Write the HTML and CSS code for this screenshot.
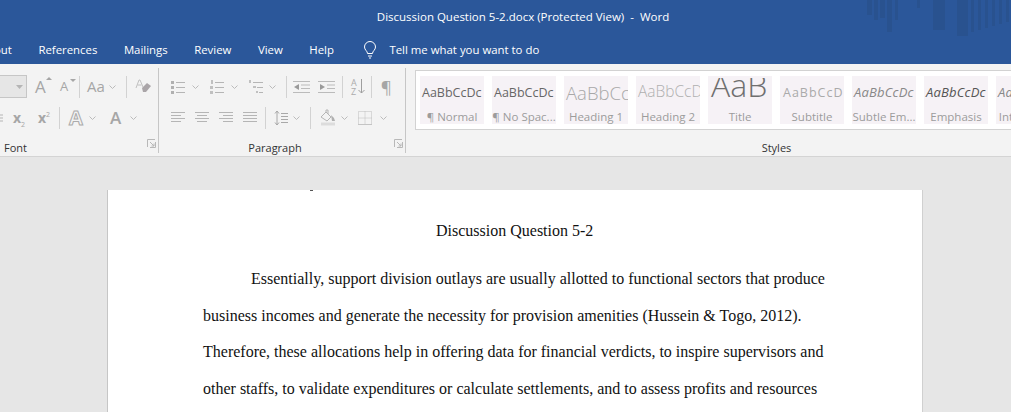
FILE: index.html
```html
<!DOCTYPE html>
<html lang="en">
<head>
<meta charset="utf-8">
<title>Discussion Question 5-2.docx (Protected View) - Word</title>
<link rel="stylesheet" href="styles.css">
</head>
<body>
<header class="titlebar">
  <svg class="pattern" width="150" height="40" viewBox="0 0 150 40" aria-hidden="true">
    <g fill="#29528f">
      <rect x="6" y="0" width="5" height="15"/><rect x="13" y="0" width="4" height="20"/><rect x="19" y="0" width="5" height="18"/><rect x="26" y="0" width="5" height="32"/><rect x="34" y="0" width="3" height="20"/>
      <rect x="56" y="0" width="3" height="8"/><rect x="72" y="0" width="12" height="30"/><rect x="96" y="0" width="11" height="36"/><rect x="110" y="0" width="3" height="32"/><rect x="117" y="0" width="3" height="30"/><rect x="124" y="0" width="3" height="28"/><rect x="131" y="0" width="3" height="26"/><rect x="138" y="0" width="3" height="24"/><rect x="145" y="0" width="3" height="22"/>
    </g>
  </svg>
  <div class="doc-title">Discussion Question 5-2.docx (Protected View)&nbsp; -&nbsp; Word</div>
  <nav class="tabs">
    <span class="tab tab-cut">Layout</span>
    <span class="tab">References</span>
    <span class="tab">Mailings</span>
    <span class="tab">Review</span>
    <span class="tab">View</span>
    <span class="tab">Help</span>
    <span class="tell">
      <svg width="14" height="18" viewBox="0 0 14 18" fill="none" stroke="#fff" stroke-width="1"><path d="M4.500 12.500C4.500 10 1.500 9 1.500 6A5.500 5.500 0 0 1 12.500 6C12.500 9 9.500 10 9.500 12.500Z"/><path d="M5 15h4M6 17h2"/></svg>
      <span>Tell me what you want to do</span>
    </span>
  </nav>
</header>

<section class="ribbon">
  <div class="group group-font">
    <div class="rows">
      <div class="row">
        <span class="combo"><svg class="chev" width="7" height="4" viewBox="0 0 7 4"><path d="M0 0h7L3.500 4Z" fill="#b5b5b5"/></svg></span>
        <span class="glyph big m8">A<i class="up"></i></span>
        <span class="glyph small m12">A<i class="down"></i></span>
        <i class="sep m7"></i>
        <span class="glyph aa m7">Aa</span>
        <svg class="chev m6" width="7" height="4" viewBox="0 0 7 4"><path d="M.5.5l3 3 3-3" fill="none" stroke="#bbb"/></svg>
        <i class="sep m10"></i>
        <svg class="m8" width="16" height="16" viewBox="0 0 16 16"><path d="M7 9l5-5 4 3-5 6H8Z" fill="#aaa5a8"/><path d="M1 9L4 1h1l3 7M2.500 6h4" fill="none" stroke="#c0c0c0"/></svg>
      </div>
      <div class="row">
        <svg width="3" height="8" viewBox="0 0 3 8"><path d="M0 1h3M0 4h3M0 7h3" stroke="#b5b5b5"/></svg>
        <span class="glyph bold m10">x<sub>2</sub></span>
        <span class="glyph bold m12">x<sup>2</sup></span>
        <i class="sep m8"></i>
        <span class="glyph outline m9">A</span>
        <svg class="chev m7" width="7" height="4" viewBox="0 0 7 4"><path d="M.5.5l3 3 3-3" fill="none" stroke="#bbb"/></svg>
        <span class="glyph colour m14">A</span>
        <svg class="chev m9" width="7" height="4" viewBox="0 0 7 4"><path d="M.5.5l3 3 3-3" fill="none" stroke="#bbb"/></svg>
      </div>
    </div>
    <footer class="group-label label-font"><span>Font</span><svg class="launcher" width="9" height="9" viewBox="0 0 9 9" fill="none" stroke="#b8b8b8"><path d="M.5 8V.5H8M8.500 3v5.500H3M3 3l4 4M7 4.500V7H4.500"/></svg></footer>
  </div>

  <div class="group group-para">
    <div class="rows">
      <div class="row">
        <svg width="14" height="14" viewBox="0 0 14 14"><path d="M5 2.500h9M5 7.500h9M5 12.500h9" stroke="#b5b5b5"/><path d="M0 1h3v3H0zM0 6h3v3H0zM0 11h3v3H0z" fill="#b0b0b0"/></svg>
        <svg class="chev m7" width="7" height="4" viewBox="0 0 7 4"><path d="M.5.5l3 3 3-3" fill="none" stroke="#bbb"/></svg>
        <svg class="m11" width="14" height="14" viewBox="0 0 14 14"><path d="M5 2.500h9M5 7.500h9M5 12.500h9" stroke="#b5b5b5"/><path d="M1 0h2v4H1zM0 6h3v3H0zM0 11h3v3H0z" fill="#c0c0c0"/></svg>
        <svg class="chev m7" width="7" height="4" viewBox="0 0 7 4"><path d="M.5.5l3 3 3-3" fill="none" stroke="#bbb"/></svg>
        <svg class="m10" width="16" height="14" viewBox="0 0 16 14"><path d="M5 2.500h10M9 7.500h6M11 12.500h4" stroke="#b5b5b5"/><path d="M1 0h2v3H1zM5 6h3v2H5zM8 11h2v2H8z" fill="#c0c0c0"/></svg>
        <svg class="chev m5" width="7" height="4" viewBox="0 0 7 4"><path d="M.5.5l3 3 3-3" fill="none" stroke="#bbb"/></svg>
        <i class="sep m10"></i>
        <svg class="m6" width="17" height="14" viewBox="0 0 17 14"><path d="M0 1.500h17M8 5h9M8 8.500h9M0 12.500h17" stroke="#bbb"/><path d="M1 7l5-3v6Z" fill="#9a9a9a"/></svg>
        <svg class="m8" width="17" height="14" viewBox="0 0 17 14"><path d="M0 1.500h17M9 5h8M9 8.500h8M0 12.500h17" stroke="#bbb"/><path d="M7 7L2 4v6Z" fill="#9a9a9a"/></svg>
        <i class="sep m7"></i>
        <span class="sort m8"><b>A<br>Z</b><svg width="7" height="15" viewBox="0 0 7 15" fill="none" stroke="#9e9e9e"><path d="M3.500 0v14M.5 11l3 3 3-3"/></svg></span>
        <i class="sep m6"></i>
        <span class="glyph pilcrow m9">¶</span>
      </div>
      <div class="row">
        <svg width="14" height="14" viewBox="0 0 14 14"><path d="M0 1.500h14M0 4.500h10M0 7.500h14M0 10.500h10" stroke="#b5b5b5"/></svg>
        <svg class="m10" width="14" height="14" viewBox="0 0 14 14"><path d="M0 1.500h14M2 4.500h10M0 7.500h14M2 10.500h10" stroke="#b5b5b5"/></svg>
        <svg class="m10" width="14" height="14" viewBox="0 0 14 14"><path d="M0 1.500h14M4 4.500h10M0 7.500h14M4 10.500h10" stroke="#b5b5b5"/></svg>
        <svg class="m10" width="14" height="14" viewBox="0 0 14 14"><path d="M0 1.500h14M0 4.500h14M0 7.500h14M0 10.500h14" stroke="#b5b5b5"/></svg>
        <i class="sep m8"></i>
        <svg class="m8" width="14" height="16" viewBox="0 0 14 16" fill="none" stroke="#a8a8a8"><path d="M3 1v14M1 3.500l2-2.500 2 2.500M1 12.500L3 15l2-2.500"/><path d="M7 3.500h7M7 6.500h7M7 9.500h7M7 12.500h7"/></svg>
        <svg class="chev m5" width="7" height="4" viewBox="0 0 7 4"><path d="M.5.5l3 3 3-3" fill="none" stroke="#bbb"/></svg>
        <i class="sep m10"></i>
        <svg class="m9" width="16" height="17" viewBox="0 0 16 17"><path d="M1 8l5-5 5 5-4 4Z" fill="none" stroke="#b5b5b5"/><path d="M6 3V1h2v4" fill="none" stroke="#b5b5b5"/><path d="M11 6l3 3 1 3h-3Z" fill="#b0b0b0"/><path d="M1 15h14" stroke="#dcdcdc" stroke-width="3"/></svg>
        <svg class="chev m5" width="7" height="4" viewBox="0 0 7 4"><path d="M.5.5l3 3 3-3" fill="none" stroke="#bbb"/></svg>
        <svg class="m10" width="14" height="14" viewBox="0 0 14 14"><path d="M.5.500h13v13H.5zM7 .5v13M.5 7h13" fill="none" stroke="#bdbdbd" stroke-dasharray="1 1"/><path d="M0 13.500h14" stroke="#c4c4c4"/></svg>
        <svg class="chev m8" width="7" height="4" viewBox="0 0 7 4"><path d="M.5.5l3 3 3-3" fill="none" stroke="#bbb"/></svg>
      </div>
    </div>
    <footer class="group-label label-para"><span>Paragraph</span><svg class="launcher" width="9" height="9" viewBox="0 0 9 9" fill="none" stroke="#b8b8b8"><path d="M.5 8V.5H8M8.500 3v5.500H3M3 3l4 4M7 4.500V7H4.500"/></svg></footer>
  </div>

  <div class="group-styles">
    <div class="gallery">
      <div class="style"><span class="sample s-normal">AaBbCcDc</span><span class="name">¶ Normal</span></div>
      <div class="style"><span class="sample s-normal">AaBbCcDc</span><span class="name">¶ No Spac...</span></div>
      <div class="style"><span class="sample s-h1">AaBbCc</span><span class="name">Heading 1</span></div>
      <div class="style"><span class="sample s-h2">AaBbCcD</span><span class="name">Heading 2</span></div>
      <div class="style"><span class="sample s-title">AaB</span><span class="name">Title</span></div>
      <div class="style"><span class="sample s-sub">AaBbCcD</span><span class="name">Subtitle</span></div>
      <div class="style"><span class="sample s-em s-subtle">AaBbCcDc</span><span class="name">Subtle Em...</span></div>
      <div class="style"><span class="sample s-em">AaBbCcDc</span><span class="name">Emphasis</span></div>
      <div class="style"><span class="sample s-em s-subtle">AaBbCcDc</span><span class="name">Intense E...</span></div>
    </div>
    <footer class="group-label label-styles">Styles</footer>
  </div>
</section>

<main class="workspace">
  <article class="page">
    <i class="prev-tail"></i>
    <h1 class="heading">Discussion Question 5-2</h1>
    <p class="line indent">Essentially, support division outlays are usually allotted to functional sectors that produce</p>
    <p class="line">business incomes and generate the necessity for provision amenities (Hussein &amp; Togo, 2012).</p>
    <p class="line">Therefore, these allocations help in offering data for financial verdicts, to inspire supervisors and</p>
    <p class="line">other staffs, to validate expenditures or calculate settlements, and to assess profits and resources</p>
  </article>
</main>
</body>
</html>
```
FILE: styles.css
```css
* { box-sizing: border-box; }
html, body { margin: 0; height: 412px; overflow: hidden; }
body { font-family: "Open Sans", "Noto Sans", sans-serif; background: #e6e6e6; }
svg { display: block; flex: none; }
i { font-style: normal; }

.titlebar { position: relative; height: 64px; background: #2b579a; color: #fff; overflow: hidden; }
.pattern { position: absolute; top: 0; right: 0; }
.doc-title { height: 33px; padding: 8px 0 0 35px; text-align: center; font-size: 11.500px; line-height: 17px; white-space: nowrap; }
.tabs { display: flex; align-items: center; height: 33px; margin-left: -24px; font-size: 11.400px; }
.tab { margin-right: 26.500px; white-space: nowrap; }
.tell { display: flex; align-items: center; gap: 12px; margin-left: 3px; font-size: 11.400px; }

.ribbon { display: flex; height: 93px; background: #f3f3f3; border-bottom: 1px solid #d4d4d4; }
.group { position: relative; display: flex; flex-direction: column; flex: none; padding-top: 11px; }
.group::after { content: ""; position: absolute; right: 0; top: 4px; bottom: 3px; width: 1px; background: #c6c6c6; }
.group-font { width: 159px; }
.group-para { width: 247px; padding-left: 12px; }
.rows { display: flex; flex-direction: column; gap: 8px; height: 71px; }
.row { display: flex; align-items: center; height: 23px; }
.sep { flex: none; width: 1px; height: 22px; background: #d2d2d2; }
.chev { flex: none; }

.combo { display: flex; align-items: center; justify-content: flex-end; flex: none; width: 27px; height: 23px; padding-right: 3px; background: #e6e6e6; border: 1px solid #c6c6c6; border-left: 0; }
.glyph { flex: none; position: relative; color: #a6a6a6; line-height: 1; }
.big { font-size: 17px; width: 13px; }
.small { font-size: 13px; width: 12px; }
.aa { font-size: 15px; width: 16px; }
.bold { font-weight: 700; font-size: 14px; width: 13px; }
.bold sub, .bold sup { font-size: 7px; line-height: 0; font-weight: 400; }
.outline { font-size: 20px; width: 13px; color: #f3f3f3; -webkit-text-stroke: 1px #ababab; font-weight: 700; }
.colour { font-size: 17px; font-weight: 600; width: 11px; }
.pilcrow { font-size: 17px; width: 10px; }
.up, .down { position: absolute; width: 0; height: 0; border-left: 3px solid transparent; border-right: 3px solid transparent; top: -1px; right: -4px; }
.up { border-bottom: 3px solid #a6a6a6; }
.down { border-top: 3px solid #a6a6a6; }
.sort { display: flex; align-items: center; gap: 1px; flex: none; }
.sort b { font-weight: 400; font-size: 9px; line-height: 9px; color: #ababab; }

.m5 { margin-left: 5px; } .m6 { margin-left: 6px; } .m7 { margin-left: 7px; } .m8 { margin-left: 8px; }
.m9 { margin-left: 9px; } .m10 { margin-left: 10px; } .m11 { margin-left: 11px; } .m12 { margin-left: 12px; } .m14 { margin-left: 14px; }

.group-label { position: relative; display: flex; justify-content: center; height: 18px; color: #333; font-size: 11px; line-height: 15px; }
.label-font { justify-content: flex-start; padding-left: 4px; }
.label-para { padding-right: 27px; }
.launcher { position: absolute; right: 3px; top: -1px; }

.group-styles { display: flex; flex-direction: column; flex: 1; min-width: 0; padding-left: 9px; padding-top: 6px; overflow: hidden; }
.gallery { display: flex; gap: 8px; flex: none; width: 700px; height: 60px; padding: 5px 4px; background: #fff; border: 1px solid #d2d2d2; border-right: 0; overflow: hidden; }
.style { display: flex; flex-direction: column; align-items: center; flex: none; width: 64px; height: 48px; background: #f6f2f6; overflow: hidden; }
.sample { display: block; flex: none; width: 100%; height: 28px; padding-left: 2px; overflow: hidden; white-space: nowrap; font-size: 12.500px; line-height: 33px; color: #666; }
.name { flex: none; font-size: 11.500px; line-height: 16px; margin-top: 5px; color: #9c9c9c; white-space: nowrap; }
.s-h1 { font-size: 18.500px; font-weight: 300; color: #a8a8a8; line-height: 33px; }
.s-h2 { font-size: 15.500px; font-weight: 300; color: #b0b0b0; line-height: 31px; }
.s-title { height: 26px; margin-top: 2px; padding-left: 3px; font-size: 32px; font-weight: 300; line-height: 14px; color: #6f6f6f; }
.s-sub { padding-left: 3px; font-size: 12.500px; letter-spacing: 1px; color: #aaa; }
.s-em { font-style: italic; font-size: 13px; letter-spacing: .2px; color: #555; }
.s-subtle { color: #888; }
.label-styles { display: block; padding: 10px 0 0 127px; height: 28px; width: 596px; text-align: center; }

.workspace { height: 255px; padding: 33px 0 0 107px; overflow: hidden; }
.page { position: relative; width: 816px; height: 300px; padding: 24px 0 0 95px; background: #fff; border-left: 1px solid #c6c6c6; border-right: 1px solid #d0d0d0; font-family: "Liberation Serif", "Times New Roman", serif; font-size: 16px; color: #111; }
.prev-tail { position: absolute; left: 202px; top: 0; width: 3px; height: 1px; background: #555; }
.heading { margin: 0 0 14px; height: 33px; line-height: 33px; padding-left: 233px; font-size: 16px; font-weight: 400; white-space: nowrap; }
.line { margin: 0; height: 36.670px; line-height: 36.670px; white-space: nowrap; }
.indent { padding-left: 48px; }
```
